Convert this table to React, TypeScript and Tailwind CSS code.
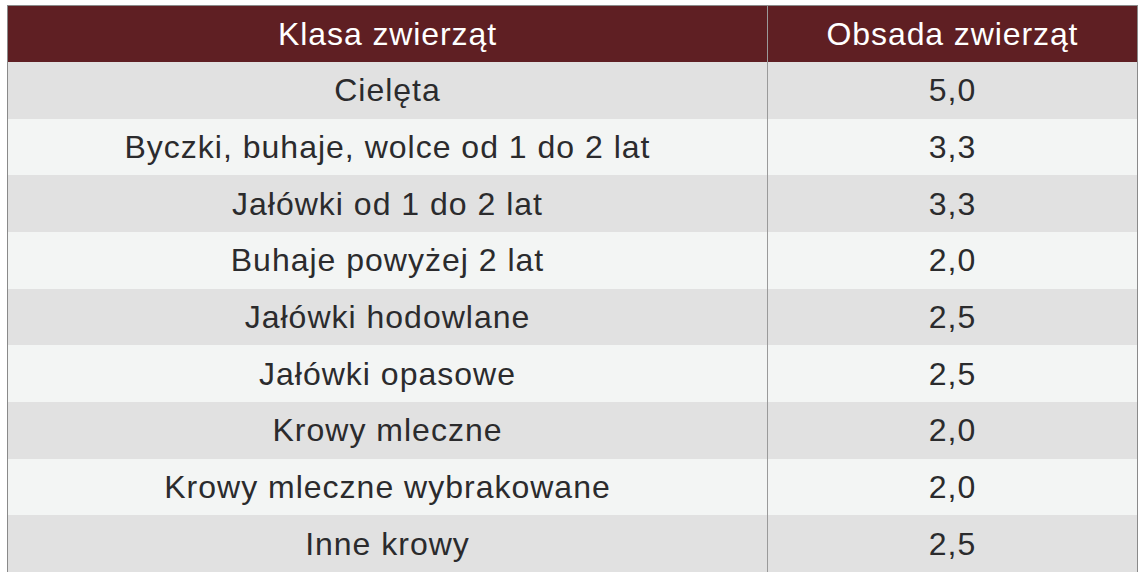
const ROWS: [string, string][] = [
  ['Cielęta', '5,0'],
  ['Byczki, buhaje, wolce od 1 do 2 lat', '3,3'],
  ['Jałówki od 1 do 2 lat', '3,3'],
  ['Buhaje powyżej 2 lat', '2,0'],
  ['Jałówki hodowlane', '2,5'],
  ['Jałówki opasowe', '2,5'],
  ['Krowy mleczne', '2,0'],
  ['Krowy mleczne wybrakowane', '2,0'],
  ['Inne krowy', '2,5'],
]

export default function App() {
  return (
    <div className="h-[582px] w-[1146px] bg-white pt-[5px] pl-[7px] font-['Liberation_Sans',Arial,sans-serif]">
      <div className="w-[1131px] border-x border-t border-[#8a8a8a]">
        {/* Header */}
        <div className="flex h-[56px] bg-[#5f1f23] text-[32px] tracking-[0.9px] text-white">
          <div className="flex w-[760px] items-center justify-center border-r border-[#9a9a9a]">
            Klasa zwierząt
          </div>
          <div className="flex flex-1 items-center justify-center">Obsada zwierząt</div>
        </div>

        {/* Rows */}
        {ROWS.map(([name, value], i) => (
          <div
            key={name}
            className={
              'flex h-[56.67px] text-[32px] tracking-[1px] text-[#2b2b2d] ' +
              (i % 2 === 0 ? 'bg-[#e1e1e1]' : 'bg-[#f3f5f4]')
            }
          >
            <div className="flex w-[760px] items-center justify-center border-r border-[#9a9a9a]">
              {name}
            </div>
            <div className="flex flex-1 items-center justify-center">{value}</div>
          </div>
        ))}
      </div>
    </div>
  )
}
